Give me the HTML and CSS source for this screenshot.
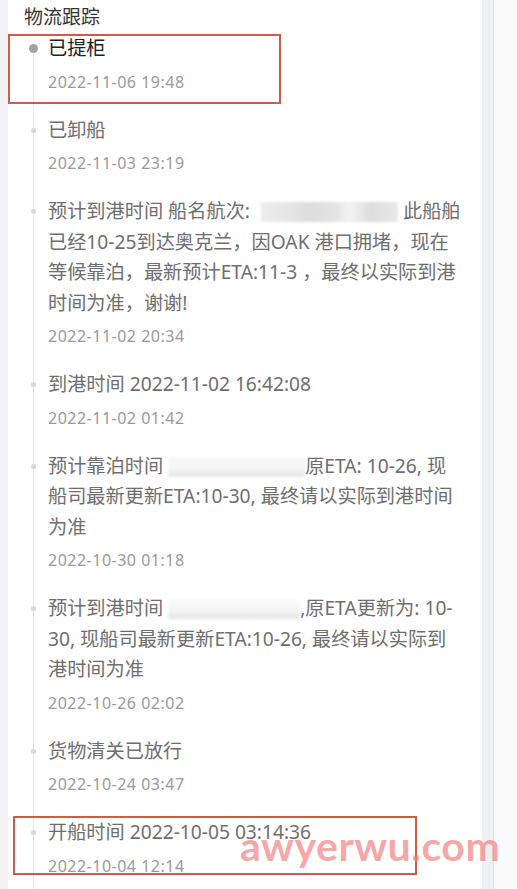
FILE: index.html
```html
<!DOCTYPE html>
<html lang="zh-CN">
<head>
  <meta charset="UTF-8">
  <meta name="viewport" content="width=device-width, initial-scale=1.0">
  <title>物流跟踪</title>
  <link rel="stylesheet" href="styles.css">
</head>
<body>
  <div class="page">
    <div class="card">
      <h2 class="card-title">物流跟踪</h2>

      <ul class="timeline">
        <li class="item current">
          <p class="item-text">已提柜</p>
          <p class="item-time">2022-11-06 19:48</p>
        </li>
        <li class="item">
          <p class="item-text">已卸船</p>
          <p class="item-time">2022-11-03 23:19</p>
        </li>
        <li class="item">
          <p class="item-text">预计到港时间 船名航次: <span class="masked m1"></span> 此船舶<br>已经10-25到达奥克兰，因OAK 港口拥堵，现在<br>等候靠泊，最新预计ETA:11-3 ，最终以实际到港<br>时间为准，谢谢!</p>
          <p class="item-time">2022-11-02 20:34</p>
        </li>
        <li class="item">
          <p class="item-text">到港时间 2022-11-02 16:42:08</p>
          <p class="item-time">2022-11-02 01:42</p>
        </li>
        <li class="item">
          <p class="item-text">预计靠泊时间 <span class="masked m2"></span>原ETA: 10-26, 现<br>船司最新更新ETA:10-30, 最终请以实际到港时间<br>为准</p>
          <p class="item-time">2022-10-30 01:18</p>
        </li>
        <li class="item">
          <p class="item-text">预计到港时间 <span class="masked m3"></span>,原ETA更新为: 10-<br>30, 现船司最新更新ETA:10-26, 最终请以实际到<br>港时间为准</p>
          <p class="item-time">2022-10-26 02:02</p>
        </li>
        <li class="item">
          <p class="item-text">货物清关已放行</p>
          <p class="item-time">2022-10-24 03:47</p>
        </li>
        <li class="item">
          <p class="item-text">开船时间 2022-10-05 03:14:36</p>
          <p class="item-time">2022-10-04 12:14</p>
        </li>
      </ul>

      <!-- highlight boxes drawn over the list -->
      <div class="mark mark-top"></div>
      <div class="mark mark-bottom"></div>
      <div class="watermark">awyerwu.com</div>
    </div>
    <div class="side-strip"></div>
    <div class="side-panel"></div>
  </div>
</body>
</html>
```

FILE: styles.css
```css
body {
  margin: 0;
  background-color: #f3f3f5;
  font-family: "Noto Sans", "Noto Sans CJK SC", sans-serif;
  color: #333;
  overflow: hidden;
}

.page {
  display: flex;
  min-height: 889px;
  padding-left: 8px;
}

.card {
  position: relative;
  flex: 1;
  background-color: #fff;
  padding-top: 5px;
}

.card-title {
  margin: 0 0 4px 16px;
  font-size: 19px;
  font-weight: normal;
  line-height: 24px;
  color: #333;
}

.timeline {
  position: relative;
  list-style: none;
  margin: 0;
  padding: 0 0 0 40px;
}

/* vertical line */
.timeline::before {
  content: "";
  position: absolute;
  left: 25px;
  top: 15px;
  bottom: -40px;
  width: 1px;
  background-color: #e6e6e6;
}

.item {
  position: relative;
  padding-bottom: 23px;
}

.item::before {
  content: "";
  position: absolute;
  left: -17px;
  top: 13px;
  width: 5px;
  height: 5px;
  border-radius: 50%;
  background-color: #d8d8d8;
}

.item.current::before {
  left: -19px;
  top: 11px;
  width: 9px;
  height: 9px;
  background-color: #a3a3a3;
}

.item-text {
  margin: 0;
  font-size: 19.2px;
  line-height: 30.5px;
  color: #6e6e6e;
}

.item.current .item-text {
  color: #222;
}

.item-time {
  margin: 8px 0 0;
  font-size: 16px;
  line-height: 20px;
  letter-spacing: 0.5px;
  color: #9a9a9a;
}

.masked {
  display: inline-block;
  height: 20px;
  vertical-align: -4px;
  filter: blur(1.5px);
}

.m1 {
  width: 137px;
  margin-left: 6px;
  background: linear-gradient(90deg, #ececec 0%, #e6e6e6 20%, #dcdcdc 35%, #e4e4e4 55%, #f2f2f2 65%, #dddddd 80%, #e8e8e8 100%);
}

.m2 {
  width: 137px;
  background: linear-gradient(180deg, #fafafa 0%, #f4f4f4 60%, #e6e6e6 100%);
}

.m3 {
  width: 132px;
  background: linear-gradient(180deg, #fafafa 0%, #f4f4f4 60%, #e4e4e4 100%);
}

.mark {
  position: absolute;
  border: 2px solid #cf5c49;
}

.mark-top {
  left: 0;
  top: 34px;
  width: 269px;
  height: 66px;
}

.mark-bottom {
  left: 5px;
  top: 816px;
  width: 400px;
  height: 55px;
}

.watermark {
  position: absolute;
  z-index: 2;
  left: 232px;
  top: 822px;
  font-family: "Lato", sans-serif;
  font-weight: bold;
  font-size: 41px;
  line-height: 48px;
  color: rgba(242, 128, 128, 0.7);
  letter-spacing: 0.5px;
  white-space: nowrap;
}

.side-strip {
  width: 11px;
  background-color: #eef0f3;
}

.side-panel {
  width: 23px;
  border-left: 1px solid #e4e4e6;
  background-color: #fbfbfc;
}
```
